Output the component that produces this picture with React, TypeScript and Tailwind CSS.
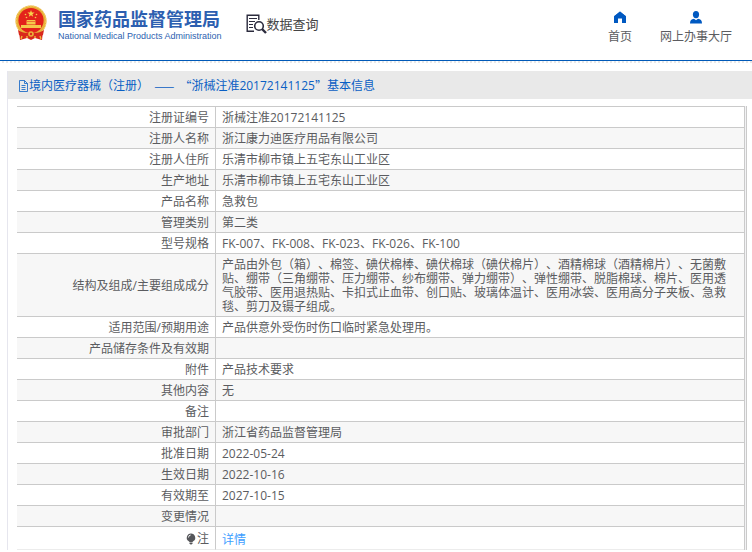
import type { ReactNode } from "react";

interface RecordRow {
    label: ReactNode;
    value: ReactNode;
}

const rows: RecordRow[] = [
    { label: "注册证编号", value: "浙械注准20172141125" },
    { label: "注册人名称", value: "浙江康力迪医疗用品有限公司" },
    { label: "注册人住所", value: "乐清市柳市镇上五宅东山工业区" },
    { label: "生产地址", value: "乐清市柳市镇上五宅东山工业区" },
    { label: "产品名称", value: "急救包" },
    { label: "管理类别", value: "第二类" },
    { label: "型号规格", value: "FK-007、FK-008、FK-023、FK-026、FK-100" },
    {
        label: "结构及组成/主要组成成分",
        value: "产品由外包（箱）、棉签、碘伏棉棒、碘伏棉球（碘伏棉片）、酒精棉球（酒精棉片）、无菌敷贴、绷带（三角绷带、压力绷带、纱布绷带、弹力绷带）、弹性绷带、脱脂棉球、棉片、医用透气胶带、医用退热贴、卡扣式止血带、创口贴、玻璃体温计、医用冰袋、医用高分子夹板、急救毯、剪刀及镊子组成。",
    },
    { label: "适用范围/预期用途", value: "产品供意外受伤时伤口临时紧急处理用。" },
    { label: "产品储存条件及有效期", value: "" },
    { label: "附件", value: "产品技术要求" },
    { label: "其他内容", value: "无" },
    { label: "备注", value: "" },
    { label: "审批部门", value: "浙江省药品监督管理局" },
    { label: "批准日期", value: "2022-05-24" },
    { label: "生效日期", value: "2022-10-16" },
    { label: "有效期至", value: "2027-10-15" },
    { label: "变更情况", value: "" },
];

function App() {
    return (
        <div
            lang="zh-CN"
            className="bg-white text-xs text-[#5b5c60] font-['Open_Sans','Noto_Sans_CJK_SC',sans-serif] [text-spacing-trim:space-all]"
        >
            <Header />
            <main className="mt-2 ml-[7px] border-l border-[#e6e6ee]">
                <h1 className="flex items-center h-7 pt-[2px] pl-[10px] bg-[#e9e9e9] text-[#0a5fc4] text-xs whitespace-pre">
                    <DocIcon />
                    <span>境内医疗器械（注册） </span>
                    <span className="px-0.5 font-['Noto_Sans_CJK_SC',sans-serif]">——</span>
                    <span> </span>
                    <span className="font-['Noto_Sans_CJK_SC',sans-serif]">“</span>
                    <span>浙械注准20172141125</span>
                    <span className="font-['Noto_Sans_CJK_SC',sans-serif]">”</span>
                    <span>基本信息</span>
                </h1>
                <div className="mt-[7px] ml-[9px] mr-[5px] border-r border-[#cacaca] bg-[#f2f2f4] pr-px">
                    <table className="w-full border-separate border-spacing-0 border-t border-r border-[#cacaca] bg-white leading-[14px]">
                        <tbody>
                            {rows.map((row, index) => (
                                <tr key={index} className="even:bg-[#f7f7f7]">
                                    <th
                                        scope="row"
                                        className="w-[199px] border-r border-b border-[#cacaca] pt-1 pb-0.5 pr-[6px] text-right font-normal"
                                    >
                                        {row.label}
                                    </th>
                                    <td className="h-[21px] border-b border-[#cacaca] pt-1 pb-0.5 pl-[6px] pr-3">{row.value}</td>
                                </tr>
                            ))}
                            <tr>
                                <th
                                    scope="row"
                                    className="h-[23px] border-r border-b border-r-[#cacaca] border-b-[#ececec] pt-1 pr-[6px] text-right font-normal"
                                >
                                    <span className="inline-flex items-center">
                                        <BulbIcon />注
                                    </span>
                                </th>
                                <td className="h-[23px] border-b border-[#ececec] pt-1 pl-[6px]">
                                    <a href="#detail" className="text-[#409eff]">详情</a>
                                </td>
                            </tr>
                        </tbody>
                    </table>
                </div>
            </main>
        </div>
    );
}

export default App

const Header = () => {
    return (
        <header>
            <div className="flex h-[60px] justify-between pl-[14px] pr-5">
                <div className="flex items-start">
                    <a href="#home" className="flex items-start gap-[10px] text-[#2d5fb0]">
                        <Emblem />
                        <span className="flex flex-col pt-2">
                            <span className="text-lg leading-[22px] font-bold">国家药品监督管理局</span>
                            <span className="font-['Liberation_Sans',sans-serif] text-[9px] leading-[13px]">
                                National Medical Products Administration
                            </span>
                        </span>
                    </a>
                    <a href="#search" className="ml-6 mt-[14px] flex items-center text-[13px] leading-5 text-[#444]">
                        <QueryIcon />
                        数据查询
                    </a>
                </div>
                <nav className="flex items-start gap-7 pt-[11px] text-[#5b5c60]">
                    <a href="#index" className="flex flex-col items-center leading-[18px]">
                        <HomeIcon />
                        <span className="mt-1">首页</span>
                    </a>
                    <a href="#hall" className="flex flex-col items-center leading-[18px]">
                        <UserIcon />
                        <span className="mt-1">网上办事大厅</span>
                    </a>
                </nav>
            </div>
            <div className="h-px bg-[#0059b8]" />
            <div className="h-[2px] bg-[repeating-conic-gradient(#e8e8e8_0_25%,#fff_0_50%)] bg-size-[4px_4px]" />
        </header>
    );
};

const Emblem = () => (
    <svg width="34" height="36" viewBox="0 0 34 36" className="mt-[5px]" aria-hidden="true">
        <path d="M5 26 L29 26 L28 35 L21 33 L17 35 L13 33 L6 35 Z" fill="#d9281c" />
        <circle cx="17" cy="16" r="15.5" fill="#e9b13a" />
        <circle cx="17" cy="16" r="15" fill="none" stroke="#f6d675" strokeWidth="1" strokeDasharray="2 1" />
        <circle cx="17" cy="15.5" r="12.6" fill="#e3221b" />
        <path d="M17 5 L17.9 7.6 L20.6 7.6 L18.4 9.2 L19.2 11.8 L17 10.2 L14.8 11.8 L15.6 9.2 L13.4 7.6 L16.1 7.6 Z" fill="#f8d34b" />
        <g fill="#f6c94a">
            <circle cx="11.5" cy="9.5" r="0.8" />
            <circle cx="22.5" cy="9.5" r="0.8" />
            <circle cx="12.5" cy="12.5" r="0.8" />
            <circle cx="21.5" cy="12.5" r="0.8" />
            <path d="M13 15h8l1 1.5H12zM12.5 17h9v2.500h-9zM7 20h20v3H7z" />
        </g>
        <path d="M4 25c3 2 6 3 9 3h8c3 0 6-1 9-3l-1 5c-3 1-5 2-8 2h-8c-3 0-5-1-8-2z" fill="#d9281c" />
        <circle cx="17" cy="29" r="2.8" fill="#e9b13a" />
        <circle cx="17" cy="29" r="1.2" fill="#d9281c" />
        <path d="M8 31l-1 3M13 31v2M21 31v2M26 31l1 3" stroke="#eeb93b" strokeWidth="1.4" />
    </svg>
);

const QueryIcon = () => (
    <svg width="21" height="20" viewBox="0 0 21 20" fill="none" stroke="#2b2b3d" aria-hidden="true">
        <path d="M8 17.2H1.2V1.2h11.6V6" strokeWidth="1.4" />
        <path d="M3 4.5h8M3 7.5h6M3 10.5h4M3 13.5h4" strokeWidth="1.2" />
        <circle cx="13" cy="12" r="4.3" strokeWidth="1.6" />
        <path d="M16 15l4 4" strokeWidth="2.4" />
    </svg>
);

const HomeIcon = () => (
    <svg width="14" height="13" viewBox="0 0 14 13" fill="#0059c1" aria-hidden="true">
        <path d="M7 .8L1 5.6V12h4V7.600h4V12h4V5.600z" />
        <path d="M7 .8L1 5.600h12z" stroke="#0059c1" strokeWidth="0.6" strokeLinejoin="round" />
    </svg>
);

const UserIcon = () => (
    <svg width="14" height="13" viewBox="0 0 14 13" fill="#0059c1" aria-hidden="true">
        <ellipse cx="7" cy="3.6" rx="3.1" ry="3.6" />
        <path d="M1 12.5c0-3 1.4-4.4 4-4.7l2 1.4 2-1.4c2.6.3 4 1.7 4 4.7z" />
    </svg>
);

const DocIcon = () => (
    <svg width="11" height="12" viewBox="0 0 11 12" fill="none" stroke="#0a5fc4" strokeWidth="0.8" aria-hidden="true">
        <path d="M1.5.5h5l3 3v8h-8zM6.5.5v3h3M3.5 5.5h4M3.5 7.5h4M3.5 9.5h4" />
    </svg>
);

const BulbIcon = () => (
    <svg width="10" height="12" viewBox="0 0 10 12" className="mr-px" fill="#55565a" aria-hidden="true">
        <path d="M5 .5a4.2 4.2 0 0 0-2.5 7.6l1 .9h3l1-.9A4.2 4.2 0 0 0 5 .5z" />
        <path d="M3.5 9.5h3v1l-1 1h-1l-1-1z" />
        <path d="M2.5 4.5A2.5 2.5 0 0 1 4.7 2" fill="none" stroke="#fff" strokeWidth="0.9" />
    </svg>
);
